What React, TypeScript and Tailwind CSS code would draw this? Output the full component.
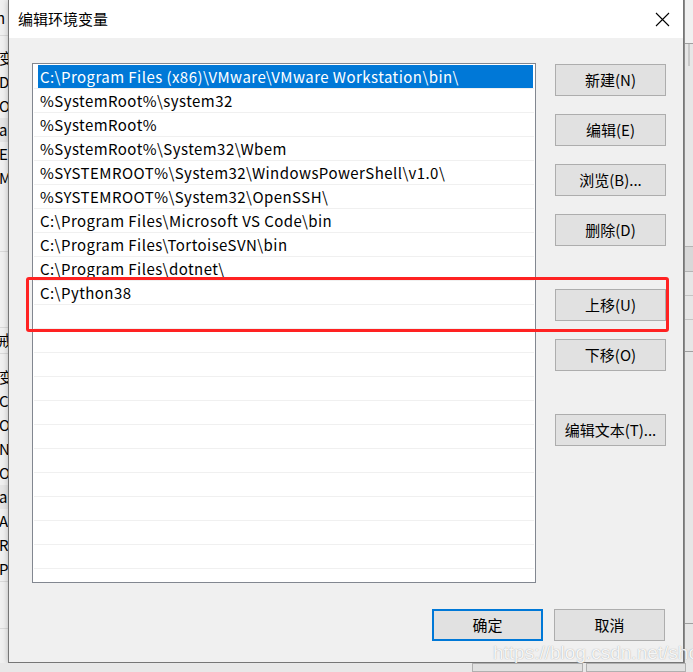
import React from 'react';

const FONT = { fontFamily: '"Noto Sans CJK SC", "Microsoft YaHei", sans-serif' };

const paths = [
  'C:\\Program Files (x86)\\VMware\\VMware Workstation\\bin\\',
  '%SystemRoot%\\system32',
  '%SystemRoot%',
  '%SystemRoot%\\System32\\Wbem',
  '%SYSTEMROOT%\\System32\\WindowsPowerShell\\v1.0\\',
  '%SYSTEMROOT%\\System32\\OpenSSH\\',
  'C:\\Program Files\\Microsoft VS Code\\bin',
  'C:\\Program Files\\TortoiseSVN\\bin',
  'C:\\Program Files\\dotnet\\',
  'C:\\Python38',
];

// fragments of the window behind the dialog, peeking out on the left
const behindTop = ['变', 'De', 'Or', 'a', 'E', 'M'];
const behindBottom = ['变', 'Co', 'Or', 'NU', 'OS', 'a', 'A', 'R', 'P'];

function Btn({ label, className = '' }: { label: string; className?: string }) {
  return (
    <button className={`flex h-[32px] w-[111px] items-center justify-center border border-[#adadad] bg-[#e1e1e1] text-[15px] text-black ${className}`}>
      {label}
    </button>
  );
}

function LeftStrip() {
  return (
    <div className="flex w-[8px] flex-col overflow-hidden bg-[#f0f0f0] text-[15px] leading-[24px] text-black">
      <div className="h-[36px] border-b border-[#d9d9d9] pt-[6px] -ml-[4px]">h</div>
      <div className="h-[10px]" />
      {behindTop.map((t, i) => (
        <div key={i} className={`h-[24px] whitespace-nowrap -ml-[1px] ${t === 'a' ? 'bg-[#e5e5e5]' : ''}`}>{t}</div>
      ))}
      <div className="h-[62px] border-b border-[#d9d9d9]" />
      <div className="h-[76px] border-b border-[#d9d9d9]" />
      <div className="h-[26px] border-b border-[#d9d9d9] -ml-[2px]">戒</div>
      <div className="h-[11px]" />
      {behindBottom.map((t, i) => (
        <div key={i} className={`h-[24px] whitespace-nowrap -ml-[1px] ${t === 'a' ? 'bg-[#e5e5e5]' : ''}`}>{t}</div>
      ))}
      <div className="h-[48px] border-t border-b border-[#d9d9d9]" />
    </div>
  );
}

function RightStrip() {
  return (
    <div className="flex w-[9px] flex-col border-l border-[#8c8c8c] bg-[#e6e6e6]">
      <div className="h-[44px] border-b border-[#a0a0a0] bg-[#f0f0f0]" />
      <div className="ml-[3px] h-[22px] w-[2px] bg-[#c8c8c8]" />
      <div className="h-[180px]" />
      <div className="h-[26px] border-t border-b border-[#b4b4b4] bg-[#d8d8d8]" />
      <div className="h-[24px] border-b border-[#c4c4c4]" />
      <div className="h-[24px] border-b border-[#c4c4c4]" />
      <div className="h-[32px] border-b border-[#a0a0a0]" />
      <div className="flex-1" />
      <div className="h-[40px] border-t border-[#a0a0a0]" />
    </div>
  );
}

export default function App() {
  const emptyRows = Array.from({ length: 12 });
  return (
    <div className="relative flex h-[672px] w-[693px] flex-col overflow-hidden bg-[#f0f0f0]" style={FONT}>
      <div className="flex h-[663px]">
        <LeftStrip />

        <div className="flex w-[677px] flex-col border-x border-b border-[#767676] bg-[#f0f0f0] shadow-[0_0_6px_rgba(0,0,0,0.25)]">
          {/* title bar */}
          <div className="flex h-[38px] items-center justify-between bg-white pl-[9px] pr-[13px]">
            <span className="text-[15px] text-black">编辑环境变量</span>
            <svg width="15" height="15" viewBox="0 0 15 15">
              <path d="M1 1 L14 14 M14 1 L1 14" stroke="#000" strokeWidth="1.1" fill="none" />
            </svg>
          </div>

          <div className="flex flex-1 flex-col pl-[23px] pt-[25px]">
            <div className="flex">
              {/* path list */}
              <div className="flex h-[520px] w-[504px] flex-col overflow-hidden border border-[#828790] bg-white px-[1px] pt-[1px]">
                {paths.map((p, i) => (
                  <div key={i} className="h-[24px] shrink-0 border-b border-[#f0f0f0] text-[15px] leading-[23px] tracking-[0.45px] text-black">
                    {i === 0 ? (
                      <div className="ml-[4px] mr-[1px] h-[23px] bg-[#0078d7] pl-[2px] text-white whitespace-nowrap">{p}</div>
                    ) : (
                      <div className="pl-[6px] whitespace-nowrap">{p}</div>
                    )}
                  </div>
                ))}
                {emptyRows.map((_, i) => (
                  <div key={'e' + i} className="h-[24px] shrink-0 border-b border-[#f0f0f0]" />
                ))}
              </div>

              {/* side buttons */}
              <div className="ml-[19px] flex flex-col">
                <Btn label="新建(N)" className="mt-[1px]" />
                <Btn label="编辑(E)" className="mt-[18px]" />
                <Btn label="浏览(B)..." className="mt-[18px]" />
                <Btn label="删除(D)" className="mt-[18px]" />
                <Btn label="上移(U)" className="mt-[43px]" />
                <Btn label="下移(O)" className="mt-[18px]" />
                <Btn label="编辑文本(T)..." className="mt-[43px]" />
              </div>
            </div>

            <div className="mt-[26px] flex gap-[11px] pl-[400px]">
              <button className="flex h-[32px] w-[111px] items-center justify-center border-2 border-[#0078d7] bg-[#e1e1e1] text-[15px] text-black">
                确定
              </button>
              <Btn label="取消" />
            </div>
          </div>
        </div>

        <RightStrip />
      </div>

      {/* window behind, bottom edge */}
      <div className="flex h-[9px] gap-[3px] bg-[#e8e8e8] pl-[472px]">
        <div className="w-[111px] border border-[#b0b0b0] bg-[#e1e1e1]" />
        <div className="w-[100px] border border-[#b0b0b0] bg-[#e1e1e1]" />
      </div>

      {/* red annotation box */}
      <div className="pointer-events-none absolute left-[26px] top-[277px] h-[55px] w-[643px] rounded-[3px] border-[3px] border-[#ff2222]" />

      {/* watermark */}
      <div
        className="pointer-events-none absolute left-[493px] top-[641px] whitespace-nowrap text-[19px] leading-[24px] text-white/90"
        style={{ fontFamily: '"Liberation Sans", Arial, sans-serif', textShadow: '0 0 1px rgba(110,110,110,0.7)' }}
      >
        https://blog.csdn.net/shchl
      </div>
    </div>
  );
}
